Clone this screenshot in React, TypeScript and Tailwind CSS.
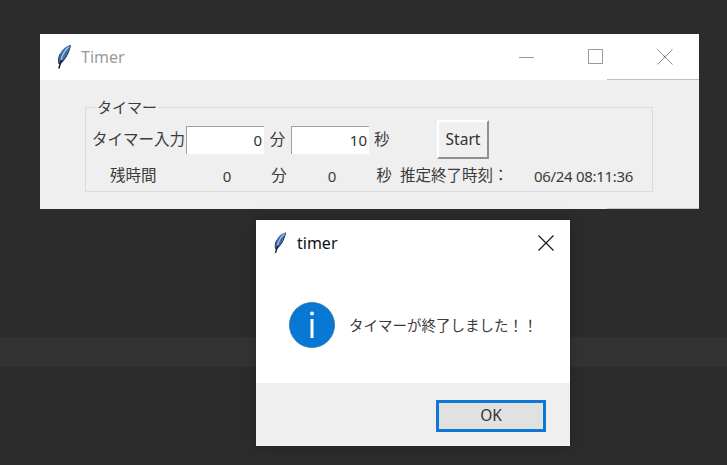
const cjk = "font-['Noto_Sans','Noto_Sans_CJK_JP',sans-serif]";

function Feather({ className }: { className: string }) {
  return (
    <svg viewBox="0 0 16 26" className={className}>
      <path d="M14.5 1C9 2 4.500 7 2.800 13c-.7 2.600-.6 5 .2 7L5.500 19C9.500 16 13.500 8 14.500 1z" fill="#3f6fa8" />
      <path d="M13.500 2.500C10 5 6.500 10 5 16" stroke="#a9c4e4" strokeWidth="1.300" fill="none" />
      <path d="M14.500 1C14 5 12 9.500 10 13l-5 6-2 1C2 17 2.500 13 4 10" stroke="#1d2b44" strokeWidth=".9" fill="none" />
      <path d="M5.500 16 2.800 24.500" stroke="#111827" strokeWidth="1.500" fill="none" />
    </svg>
  );
}

function Cell({ w, className = "", children }: { w: string; className?: string; children: React.ReactNode }) {
  return <div className={`shrink-0 whitespace-nowrap ${w} ${className}`}>{children}</div>;
}

function Entry({ value }: { value: string }) {
  return (
    <div className="w-[78px] h-7 bg-white border-t border-l border-[#a0a0a0] flex items-center justify-end pr-[2px] text-[15px] text-[#333]">
      {value}
    </div>
  );
}

function TimerWindow() {
  return (
    <div className="absolute left-10 top-[34px] w-[659px] h-[175px] bg-[#efefef] flex flex-col">
      <div className="h-[46px] bg-white flex items-center shrink-0 relative">
        <Feather className="w-[16px] h-[26px] ml-4" />
        <span className="ml-[9px] text-[16px] text-[#9a9a9a]">Timer</span>
        <div className="ml-auto flex items-center">
          <svg width="16" height="16" className="mr-[53px]"><path d="M0 8.500h15" stroke="#9a9a9a" /></svg>
          <svg width="16" height="16" className="mr-[53px]"><rect x=".5" y=".5" width="14" height="14" fill="none" stroke="#9a9a9a" /></svg>
          <svg width="16" height="16" className="mr-[26px]"><path d="M.5.500l15 15M15.500.500l-15 15" stroke="#8a8a8a" /></svg>
        </div>
        <div className="absolute right-0 bottom-0 w-[92px] h-px bg-[#bdbdbd]" />
      </div>
      <div className="relative ml-[45px] mt-[27px] w-[568px] h-[85px] border border-[#dcdcdc] text-[#3c3c3c] text-[15.500px] pl-[6px]">
        <span className="absolute left-[10px] -top-[13px] px-px bg-[#efefef] leading-6 text-[15px]">タイマー</span>
        <div className="flex items-center h-[39px] mt-3">
          <Cell w="w-[94px]">タイマー入力</Cell>
          <Entry value="0" />
          <Cell w="w-[27px]" className="text-center">分</Cell>
          <Entry value="10" />
          <Cell w="w-[68px]" className="pl-[5px]">秒</Cell>
          <button className="w-[52px] h-[39px] bg-[#f0f0f0] border-2 border-t-white border-l-white border-r-[#8f8f8f] border-b-[#8f8f8f] text-[15.500px] leading-none text-[#333]">Start</button>
        </div>
        <div className="flex items-center h-[34px]">
          <Cell w="w-[100px]" className="pl-[18px]">残時間</Cell>
          <Cell w="w-[70px]" className="text-center text-[15px]">0</Cell>
          <Cell w="w-[34px]" className="text-center">分</Cell>
          <Cell w="w-[72px]" className="text-center text-[15px]">0</Cell>
          <Cell w="w-[32px]" className="text-center">秒</Cell>
          <Cell w="w-[134px]" className="text-[15.500px]">推定終了時刻：</Cell>
          <Cell w="w-[113px]" className="text-[15px] tracking-[-0.300px]">06/24 08:11:36</Cell>
        </div>
      </div>
      <div className="absolute right-0 bottom-0 w-[92px] h-px bg-[#c8c8c8]" />
    </div>
  );
}

function Dialog() {
  return (
    <div className="absolute left-64 top-[220px] w-[314px] h-[226px] bg-white flex flex-col shadow-[0_0_12px_rgba(0,0,0,0.25)]">
      <div className="h-[46px] flex items-center shrink-0">
        <Feather className="w-[14px] h-[24px] ml-[17px]" />
        <span className="ml-[10px] text-[16px] text-[#111]">timer</span>
        <svg width="16" height="16" className="ml-auto mr-4"><path d="M.5.500l15 15M15.500.500l-15 15" stroke="#111" strokeWidth="1.100" /></svg>
      </div>
      <div className="h-[117px] flex items-start pl-[33px] pt-[36px]">
        <svg width="46" height="46" viewBox="0 0 46 46">
          <circle cx="23" cy="23" r="22.500" fill="#0778d4" stroke="#2a6aa8" strokeWidth=".8" />
          <rect x="21.500" y="17" width="3" height="19" fill="#fff" />
          <circle cx="23" cy="11.500" r="2" fill="#fff" />
        </svg>
        <span className="ml-[14px] mt-[12px] text-[14.500px] leading-[22px] text-[#3a3a3a] whitespace-nowrap">タイマーが終了しました！！</span>
      </div>
      <div className="flex-1 bg-[#efefef] flex justify-end items-start pt-[17px] pr-6">
        <button className="w-[110px] h-[32px] bg-[#e1e1e1] border-[3px] border-[#0f78d4] text-[15.500px] leading-none text-[#333]">OK</button>
      </div>
    </div>
  );
}

export default function App() {
  return (
    <div className={`relative w-[727px] h-[465px] overflow-hidden bg-[#2c2c2c] ${cjk}`}>
      <div className="h-[337px]" />
      <div className="h-[30px] bg-[#333333]" />
      <TimerWindow />
      <Dialog />
    </div>
  );
}
